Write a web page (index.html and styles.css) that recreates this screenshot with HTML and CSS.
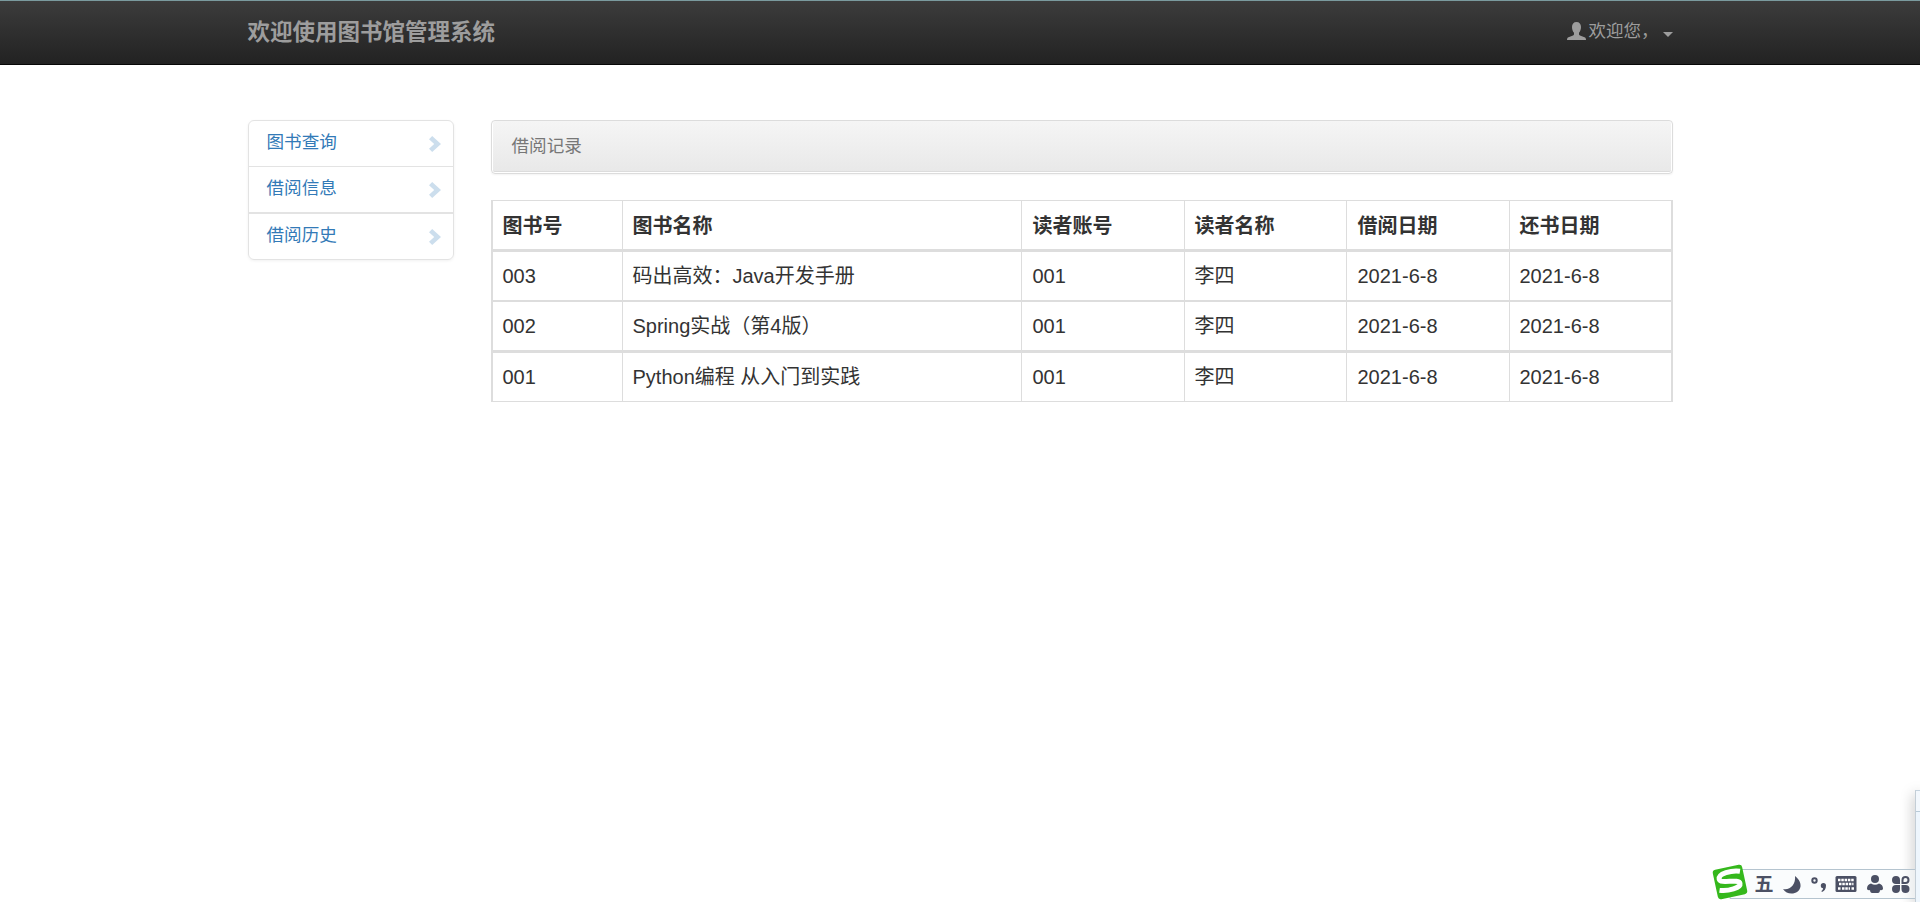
FILE: index.html
```html
<!DOCTYPE html>
<html lang="zh-CN">
<head>
    <meta charset="UTF-8">
    <title>图书馆管理系统</title>
    <link rel="stylesheet" href="styles.css">
</head>
<body>
    <nav class="navbar">
        <div class="container">
            <a class="brand" href="#">欢迎使用图书馆管理系统</a>
            <a class="user" href="#">
                <svg class="icon-user" viewBox="0 0 19 18"><path d="M9.500 0C6.600 0 5 2 5 5c0 2.500.8 4.500 2 5.700v1.600c0 .6-.4 1-1 1.200L1.500 15.200C.5 15.600 0 16.300 0 18h19c0-1.700-.5-2.400-1.500-2.800L13 13.500c-.6-.2-1-.6-1-1.200v-1.600c1.200-1.200 2-3.200 2-5.700 0-3-1.600-5-4.500-5z"/></svg>
                <span>欢迎您，</span>
                <b class="caret"></b>
            </a>
        </div>
    </nav>
    <div class="container main">
        <ul class="side">
            <li><a href="#">图书查询</a><svg viewBox="0 0 12 16"><path d="M0 3.200L3.200 0 12 8l-8.800 8L0 12.800 5.200 8z"/></svg></li>
            <li><a href="#">借阅信息</a><svg viewBox="0 0 12 16"><path d="M0 3.200L3.200 0 12 8l-8.800 8L0 12.800 5.200 8z"/></svg></li>
            <li><a href="#">借阅历史</a><svg viewBox="0 0 12 16"><path d="M0 3.200L3.200 0 12 8l-8.800 8L0 12.800 5.200 8z"/></svg></li>
        </ul>
        <div class="content">
            <div class="crumb">借阅记录</div>
            <table class="table">
                <colgroup>
                    <col class="c1"><col class="c2"><col class="c3"><col class="c4"><col class="c3"><col class="c3">
                </colgroup>
                <thead>
                    <tr><th>图书号</th><th>图书名称</th><th>读者账号</th><th>读者名称</th><th>借阅日期</th><th>还书日期</th></tr>
                </thead>
                <tbody>
                    <tr><td>003</td><td>码出高效：Java开发手册</td><td>001</td><td>李四</td><td>2021-6-8</td><td>2021-6-8</td></tr>
                    <tr><td>002</td><td>Spring实战（第4版）</td><td>001</td><td>李四</td><td>2021-6-8</td><td>2021-6-8</td></tr>
                    <tr class="last"><td>001</td><td>Python编程 从入门到实践</td><td>001</td><td>李四</td><td>2021-6-8</td><td>2021-6-8</td></tr>
                </tbody>
            </table>
        </div>
    </div>

    <div class="edge"></div>
    <!-- 输入法工具条 -->
    <div class="ime">
        <svg viewBox="0 0 215 42">
            <path class="ime-bar" d="M30 9.500H216V38.500H30z"/>
            <g transform="rotate(-12 30 22)">
                <rect class="ime-logo" x="15" y="7" width="30" height="30" rx="3"/>
                <path class="ime-s" d="M42 13.500C34 10.500 20 11.500 20 17c0 5.500 19.500 3 19.500 8.500 0 4.500-13 5.500-21.500 2.500"/>
            </g>
            <text class="ime-text" x="54.500" y="31">五</text>
            <g class="ime-fill">
                <path d="M95 16c4 3 6 7 5.500 10.500C99.800 31 96 33.500 91.500 33.500c-3.500 0-6.500-1.500-8.500-4.500 7 1.500 13-4.500 12-13z"/>
                <path d="M120.800 25.500a2.600 2.600 0 0 1 5.200 0c0 3.500-1.500 5.500-4 6.500l-.7-1c1.200-.8 1.800-1.800 1.800-2.800a2.500 2.500 0 0 1-2.300-2.700z"/>
                <rect x="135.500" y="16" width="21" height="16" rx="1.500"/>
                <circle cx="175" cy="19" r="4"/>
                <path d="M171 23.500q4 2.500 8 0c2.500.5 4 2.500 4 5 0 1.500-1.500 2-3 1.500 0 2-1 3-2 3h-6c-1 0-2-1-2-3-1.500.5-3 0-3-1.500 0-2.500 1.500-4.500 4-5z"/>
                <path d="M196 16a4 4 0 0 1 4 4v4h-4a4 4 0 0 1 0-8zM196 25h4v4a4 4 0 1 1-4-4zM201.500 25h4a4 4 0 1 1-4 4z"/>
            </g>
            <path class="ime-keys" d="M138 20h16M139 24h14.500M138 28.500h2.500M142 28.500h8M151.500 28.500h2.500"/>
            <g class="ime-line">
                <circle cx="114.500" cy="20.500" r="2.200"/>
                <path d="M202.500 23v-3a3 3 0 1 1 3 3z"/>
            </g>
        </svg>
    </div>
</body>
</html>
```
FILE: styles.css
```css
* {
    margin: 0;
    padding: 0;
    box-sizing: border-box;
    list-style: none;
}
body {
    height: 902px;
    overflow: hidden;
    background: #fff;
    color: #333;
    font: 20px/28px "Liberation Sans", "Noto Sans CJK SC", sans-serif;
}
a {
    text-decoration: none;
}
.container {
    width: 1425px;
    margin: 0 auto;
    display: flex;
}
.navbar {
    height: 65px;
    border-top: 1px solid #7a9a9e;
    border-bottom: 1px solid #080808;
    background: linear-gradient(#3c3c3c, #222);
}
.navbar .container {
    height: 63px;
    align-items: center;
    justify-content: space-between;
}
.brand {
    font-size: 22.5px;
    font-weight: bold;
    color: #9d9d9d;
}
.user {
    display: flex;
    align-items: center;
    padding-bottom: 3px;
    font-size: 17.5px;
    color: #9d9d9d;
}
.icon-user {
    width: 19px;
    height: 18px;
    margin-right: 3px;
    fill: #9d9d9d;
}
.caret {
    margin: 6px 0 0 4px;
    border: 5px solid transparent;
    border-top-color: #9d9d9d;
    border-bottom: 0;
}
.main {
    padding-top: 55px;
    align-items: flex-start;
}
.side {
    width: 206px;
    margin-right: 37px;
    border: 1px solid #e3e3e3;
    border-radius: 6px;
    box-shadow: 0 1px 3px rgba(0, 0, 0, .06);
    font-size: 17.6px;
}
.side li {
    height: 46px;
    padding: 0 12px 0 18px;
    display: flex;
    align-items: center;
    justify-content: space-between;
    border-bottom: 1px solid #e3e3e3;
}
.side li:nth-child(2) {
    height: 47px;
    border-bottom-width: 2px;
}
.side li:last-child {
    height: 45px;
    border-bottom: 0;
}
.side a {
    padding-bottom: 3px;
    color: #337ab7;
}
.side svg {
    width: 12px;
    height: 16px;
    fill: #ccdeed;
}
.content {
    width: 1182px;
}
.crumb {
    height: 54px;
    margin-bottom: 26px;
    padding: 0 20px;
    border: 1px solid #dcdcdc;
    border-radius: 4px;
    background: linear-gradient(#f5f5f5, #e8e8e8);
    box-shadow: inset 0 -1px #fff, inset 1px 0 #fff, inset -1px 0 #fff, inset 0 -2px #dcdcdc, 0 1px 2px rgba(0, 0, 0, .05);
    font-size: 17.6px;
    line-height: 50px;
    color: #777;
}
.table {
    width: 1182px;
    table-layout: fixed;
    border-collapse: separate;
    border-spacing: 0;
}
.c1 { width: 132px; }
.c2 { width: 399px; }
.c3 { width: 163px; }
.c4 { width: 162px; }
.table th,
.table td {
    height: 51px;
    padding: 0 10px;
    text-align: left;
    border-right: 1px solid #ddd;
    border-bottom: 3px solid #ddd;
}
.table th {
    height: 52px;
    padding-top: 2px;
    border-top: 1px solid #ddd;
}
.table tbody tr:first-child td {
    height: 50px;
    border-bottom-width: 2px;
}
.table .last td {
    height: 49px;
    border-bottom-width: 1px;
}
.table th:first-child,
.table td:first-child {
    border-left: 2px solid #ddd;
}
.table th:nth-child(3),
.table td:nth-child(3),
.table th:nth-child(5),
.table td:nth-child(5) {
    padding-left: 11px;
}
.table th:last-child,
.table td:last-child {
    border-right-width: 2px;
}
.ime {
    position: absolute;
    left: 1700px;
    top: 860px;
    width: 215px;
    height: 42px;
}
.ime svg {
    display: block;
    width: 215px;
    height: 42px;
}
.ime-bar {
    fill: rgba(246, 249, 251, .5);
    stroke: #b5c4cf;
}
.ime-logo {
    fill: #35b81c;
}
.ime-s {
    fill: none;
    stroke: #fff;
    stroke-width: 5;
}
.ime-text {
    font-size: 19px;
    font-weight: bold;
    fill: #4b5064;
}
.ime-line {
    fill: none;
    stroke: #4b5064;
    stroke-width: 2;
}
.ime-fill {
    fill: #4b5064;
}
.ime-keys {
    fill: none;
    stroke: #fff;
    stroke-width: 2.5;
    stroke-dasharray: 2.5 .8;
}
.edge {
    position: absolute;
    left: 1915px;
    top: 790px;
    width: 5px;
    height: 112px;
    border-left: 1px solid #c4ced6;
    border-top: 1px solid #c5d3de;
    background: linear-gradient(#f3f8fd 20px, #b9cbd8 20px, #b9cbd8 21px, #eef6fd 21px);
    box-shadow: 0 4px 14px rgba(0, 0, 0, .4);
}
```
